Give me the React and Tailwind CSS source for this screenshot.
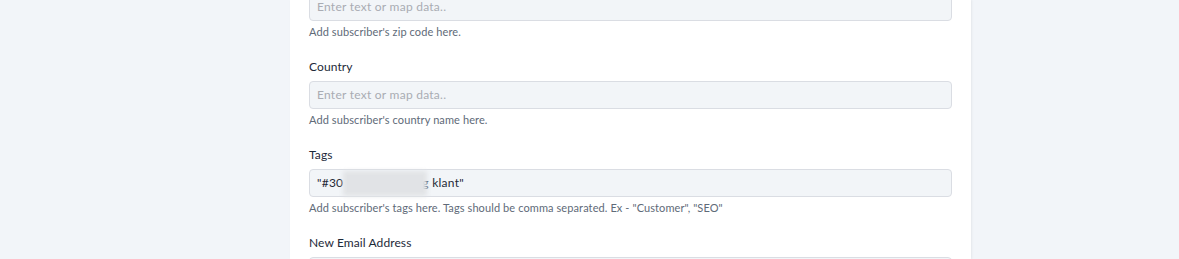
const FIELDS = [
  { label: null, help: "Add subscriber's zip code here." },
  { label: "Country", help: "Add subscriber's country name here." },
  {
    label: "Tags",
    help: 'Add subscriber\'s tags here. Tags should be comma separated. Ex - "Customer", "SEO"',
    tags: true,
  },
  { label: "New Email Address", help: null },
];

const Field = ({ label, help, tags }) => (
  <div className="flex flex-col">
    {label && (
      <label className="block text-[12px] leading-[18px] tracking-[0.1px] text-[#1d2939] mb-[5px]">
        {label}
      </label>
    )}
    <div className="h-[28px] rounded-[4px] border border-[#dadde3] bg-[#f2f5f8] flex items-center pl-[7px] text-[12px] tracking-[0.25px] whitespace-nowrap">
      {tags ? (
        <span className="flex items-center text-[#1f2937]">
          <span>"#30</span>
          <span className="relative z-10 inline-block w-[84px] h-[25px] -mr-[5px] bg-[#e1e3e6] blur-[2px]" />
          <span>g klant"</span>
        </span>
      ) : (
        <span className="text-[#a9acb3]">Enter text or map data..</span>
      )}
    </div>
    {help && (
      <p className="mt-[3px] text-[11px] leading-[16px] tracking-[0.1px] text-[#606a78]">{help}</p>
    )}
  </div>
);

export default function App() {
  return (
    <div
      className="h-[259px] w-[1179px] overflow-hidden bg-[#f2f5f9]"
      style={{ fontFamily: "Lato, 'Open Sans', sans-serif" }}
    >
      <div className="ml-[290px] w-[681px] h-full bg-white px-[19px] shadow-[1px_0_2px_rgba(0,0,0,0.06)] overflow-hidden">
        <div className="-mt-[7px] flex flex-col gap-[18px]">
          {FIELDS.map((f, i) => (
            <Field key={i} {...f} />
          ))}
        </div>
      </div>
    </div>
  );
}
